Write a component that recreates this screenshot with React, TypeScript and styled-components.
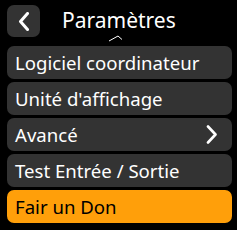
import React from "react";
import styled, { createGlobalStyle } from "styled-components";

const Global = createGlobalStyle`
  html, body { margin: 0; padding: 0; background: #000; }
  body { width: 237px; height: 230px; overflow: hidden; font-family: "Noto Sans", "Open Sans", sans-serif; }
`;

const Screen = styled.div`
  width: 237px;
  height: 230px;
  background: #000;
  display: flex;
  flex-direction: column;
`;

const Header = styled.div`
  position: relative;
  display: flex;
  align-items: center;
  padding: 5px 0 0 7px;
  height: 32px;
  margin-bottom: 9px;
`;

const BackButton = styled.div`
  width: 33px;
  height: 32px;
  border-radius: 7px;
  background: #333333;
  display: flex;
  align-items: center;
  justify-content: center;
`;

const Title = styled.div`
  margin-left: 22px;
  color: #ffffff;
  font-size: 21px;
  line-height: 24px;
  margin-top: -2px;
`;

const Caret = styled.svg`
  position: absolute;
  left: 108px;
  top: 35px;
`;

const List = styled.div`
  display: flex;
  flex-direction: column;
  gap: 3px;
  padding: 0 5px 0 7px;
`;

const Row = styled.div<{ $accent?: boolean }>`
  height: 33px;
  border-radius: 7px;
  background: ${(p) => (p.$accent ? "#ff9f0a" : "#333333")};
  color: ${(p) => (p.$accent ? "#000000" : "#ffffff")};
  display: flex;
  align-items: center;
  justify-content: space-between;
  padding: 0 14px 0 8px;
  font-size: 18.6px;
  line-height: 20px;
`;

const Chevron = ({ dir }: { dir: "left" | "right" }) =>
  dir === "left" ? (
    <svg width="12" height="19" viewBox="0 0 12 19">
      <path d="M9.5 1.5 L2.5 9.5 L9.5 17.5" fill="none" stroke="#fff" strokeWidth="3" strokeLinecap="round" strokeLinejoin="round" />
    </svg>
  ) : (
    <svg width="12" height="19" viewBox="0 0 12 19">
      <path d="M2 1.5 L9.5 9.5 L2 17.5" fill="none" stroke="#fff" strokeWidth="2.6" strokeLinecap="round" strokeLinejoin="round" />
    </svg>
  );

const items = [
  { label: "Logiciel coordinateur" },
  { label: "Unité d'affichage" },
  { label: "Avancé", arrow: true },
  { label: "Test Entrée / Sortie" },
  { label: "Fair un Don", accent: true },
];

export default function App() {
  return (
    <>
      <Global />
      <Screen>
        <Header>
          <BackButton>
            <Chevron dir="left" />
          </BackButton>
          <Title>Paramètres</Title>
          <Caret width="15" height="7" viewBox="0 0 15 7">
            <path d="M1 6 L10 1 L14 4.5" fill="none" stroke="#fff" strokeWidth="1" />
          </Caret>
        </Header>
        <List>
          {items.map((it) => (
            <Row key={it.label} $accent={it.accent}>
              <span>{it.label}</span>
              {it.arrow && <Chevron dir="right" />}
            </Row>
          ))}
        </List>
      </Screen>
    </>
  );
}
